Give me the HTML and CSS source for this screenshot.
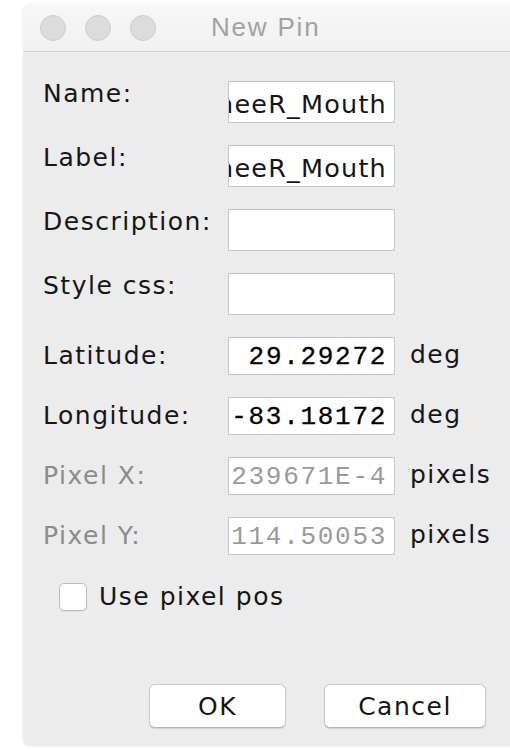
FILE: index.html
```html
<!DOCTYPE html>
<html lang="en">
<head>
<meta charset="utf-8">
<title>New Pin</title>
<link rel="stylesheet" href="styles.css">
</head>
<body>
<div class="window">
  <div class="titlebar">
    <div class="lights">
      <span class="light"></span>
      <span class="light"></span>
      <span class="light"></span>
    </div>
    <div class="title">New Pin</div>
  </div>

  <div class="content">
    <div class="form">
      <label class="lbl top">Name:</label>
      <div class="field text"><span>SuwanneeR_Mouth</span></div>
      <span class="unit"></span>

      <label class="lbl top">Label:</label>
      <div class="field text"><span>SuwanneeR_Mouth</span></div>
      <span class="unit"></span>

      <label class="lbl top">Description:</label>
      <div class="field text"></div>
      <span class="unit"></span>

      <label class="lbl top">Style css:</label>
      <div class="field text"></div>
      <span class="unit"></span>

      <label class="lbl">Latitude:</label>
      <div class="field num"><span>29.29272</span></div>
      <span class="unit">deg</span>

      <label class="lbl">Longitude:</label>
      <div class="field num"><span>-83.18172</span></div>
      <span class="unit">deg</span>

      <label class="lbl off">Pixel X:</label>
      <div class="field num off"><span>239671E-4</span></div>
      <span class="unit">pixels</span>

      <label class="lbl off">Pixel Y:</label>
      <div class="field num off"><span>114.50053</span></div>
      <span class="unit">pixels</span>
    </div>

    <label class="check">
      <span class="box"></span>
      <span>Use pixel pos</span>
    </label>

    <div class="buttons">
      <button class="btn ok">OK</button>
      <button class="btn cancel">Cancel</button>
    </div>
  </div>
</div>
</body>
</html>
```

FILE: styles.css
```css
html, body {
  margin: 0;
  padding: 0;
  background: #ffffff;
  overflow: hidden;
}

body {
  width: 510px;
  height: 749px;
  font-family: "DejaVu Sans", "Liberation Sans", sans-serif;
  font-size: 25px;
  letter-spacing: 1.5px;
  color: #161616;
}

/* dialog window */
.window {
  margin: 4px 0 0 23px;
  width: 500px;
  height: 742px;
  background: #ececec;
  border-radius: 8px 8px 6px 6px;
  box-shadow: 0 0 2px rgba(0, 0, 0, 0.12);
  display: flex;
  flex-direction: column;
  overflow: hidden;
}

.titlebar {
  height: 47px;
  flex: none;
  display: flex;
  align-items: center;
  padding-left: 17px;
  background: linear-gradient(#f7f7f7, #f1f1f1);
  border-bottom: 1px solid #d2d2d2;
}

.lights {
  display: flex;
  gap: 19px;
}

.light {
  width: 26px;
  height: 26px;
  border-radius: 50%;
  background: #dcdcdc;
  border: 1px solid #cdcdcd;
  box-sizing: border-box;
}

.title {
  margin-left: 55px;
  font-family: "Liberation Sans", "DejaVu Sans", sans-serif;
  font-size: 26px;
  letter-spacing: 1.8px;
  color: #a2a2a2;
}

.content {
  flex: 1;
  display: flex;
  flex-direction: column;
  padding: 29px 0 18px 20px;
}

/* label / field / unit grid */
.form {
  display: grid;
  grid-template-columns: 170px 167px auto;
  column-gap: 15px;
  row-gap: 22px;
}

.lbl {
  line-height: 28px;
  align-self: center;
  white-space: nowrap;
}

.lbl.top {
  align-self: start;
  margin-top: -1px;
}

.lbl.off {
  color: #8b8b8b;
}

.field {
  background: #ffffff;
  border: 1px solid #c6c6c6;
  box-sizing: border-box;
  display: flex;
  align-items: center;
  justify-content: flex-end;
  overflow: hidden;
  white-space: nowrap;
}

.field.text {
  height: 42px;
  padding: 4px 7px 0 0;
  line-height: 28px;
  font-size: 25.5px;
  letter-spacing: 1.2px;
}

.field.num {
  height: 38px;
  padding: 1px 7px 0 0;
  font-family: "Liberation Mono", "DejaVu Sans Mono", monospace;
  font-size: 26px;
  letter-spacing: 1.7px;
  color: #000000;
  -webkit-text-stroke: 0.3px #000000;
}

.field.num.off {
  color: #9a9a9a;
  -webkit-text-stroke: 0;
}

.unit {
  align-self: center;
  line-height: 28px;
  margin-top: -3px;
}

/* checkbox row */
.check {
  display: flex;
  align-items: center;
  gap: 12px;
  margin: 27px 0 0 16px;
  line-height: 30px;
}

.box {
  width: 28px;
  height: 28px;
  box-sizing: border-box;
  background: #ffffff;
  border: 1px solid #bdbdbd;
  border-radius: 5px;
  box-shadow: 0 1px 1px rgba(0, 0, 0, 0.06);
}

/* dialog buttons */
.buttons {
  margin-top: auto;
  display: flex;
  gap: 38px;
  padding-left: 106px;
}

.btn {
  height: 44px;
  box-sizing: border-box;
  background: #ffffff;
  border: 1px solid #c8c8c8;
  border-bottom-color: #b4b4b4;
  border-radius: 6px;
  box-shadow: 0 1px 1px rgba(0, 0, 0, 0.12);
  font-family: "DejaVu Sans", "Liberation Sans", sans-serif;
  font-size: 25px;
  letter-spacing: 1.5px;
  color: #161616;
  padding: 0;
}

.btn.ok {
  width: 137px;
}

.btn.cancel {
  width: 162px;
}
```
